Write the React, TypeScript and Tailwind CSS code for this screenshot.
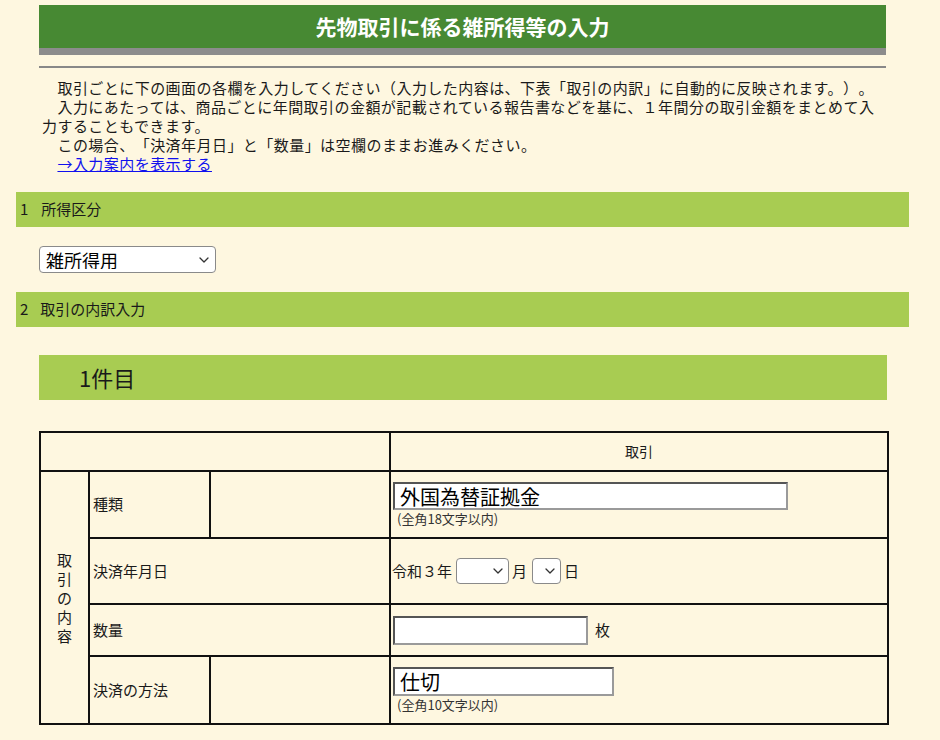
import React from "react";

const Chevron = ({ className }: { className?: string }) => (
  <svg className={className} width="10" height="6" viewBox="0 0 10 6" fill="none">
    <path d="M1 1l4 4 4-4" stroke="#333" strokeWidth="1.3" strokeLinecap="round" strokeLinejoin="round" />
  </svg>
);

const SmallSelect = ({ w }: { w: string }) => (
  <span className={`relative inline-block h-[26px] ${w}`}>
    <select className="h-full w-full appearance-none rounded-[4px] border border-[#8a8a8a] bg-white outline-none">
      <option></option>
    </select>
    <Chevron className="pointer-events-none absolute right-[6px] top-[10px]" />
  </span>
);

const inputCls =
  "block bg-white border-2 border-t-[#555] border-l-[#555] border-b-[#9a9a9a] border-r-[#9a9a9a] outline-none text-[20px] leading-none px-[5px] text-black font-['Noto_Sans_CJK_JP',sans-serif]";

const IDSP = "\u3000";

export default function App() {
  return (
    <div className="min-h-[740px] bg-[#fef7e0] font-['Noto_Sans_CJK_JP',sans-serif] text-[#1a1a1a] [text-spacing-trim:space-all]">
      <div className="ml-[16px] w-[893px] pt-[5px] pb-[20px]">
        {/* Title */}
        <div className="ml-[23px] w-[847px]">
          <div className="flex h-[43px] items-center justify-center bg-[#478933] text-[21px] font-bold text-white">
            先物取引に係る雑所得等の入力
          </div>
          <div className="h-[7px] bg-[#8c8c8c]" />
          <div className="mt-[11px] h-[2px] bg-[#888]" />
        </div>

        {/* Intro */}
        <div className="ml-[26px] mt-[10px] w-[844px] text-[15px] leading-[19px] tracking-[0.45px]">
          <p>{IDSP}取引ごとに下の画面の各欄を入力してください（入力した内容は、下表「取引の内訳」に自動的に反映されます。）。</p>
          <p>{IDSP}入力にあたっては、商品ごとに年間取引の金額が記載されている報告書などを基に、１年間分の取引金額をまとめて入力することもできます。</p>
          <p>{IDSP}この場合、「決済年月日」と「数量」は空欄のままお進みください。</p>
          <p>
            {IDSP}
            <a href="#" className="text-[#1010ee] underline">→入力案内を表示する</a>
          </p>
        </div>

        {/* Section 1 */}
        <div className="mt-[19px] flex h-[35px] items-center bg-[#a8cc52] pl-[4px] text-[15px]">
          <span>1</span>
          <span className="ml-[13px]">所得区分</span>
        </div>

        <div className="relative ml-[23px] mt-[19px] h-[27px] w-[177px]">
          <select className="h-full w-full appearance-none rounded-[4px] border border-[#8a8a8a] bg-white pl-[6px] text-[18px] leading-none text-black outline-none font-['Noto_Sans_CJK_JP',sans-serif]">
            <option>雑所得用</option>
          </select>
          <Chevron className="pointer-events-none absolute right-[7px] top-[11px]" />
        </div>

        {/* Section 2 */}
        <div className="mt-[19px] flex h-[35px] items-center bg-[#a8cc52] pl-[4px] text-[15px]">
          <span>2</span>
          <span className="ml-[12px]">取引の内訳入力</span>
        </div>

        <div className="ml-[23px] mt-[28px] flex h-[45px] w-[848px] items-center bg-[#a8cc52] pl-[40px] text-[22px]">
          1件目
        </div>

        {/* Table */}
        <table className="ml-[23px] mt-[31px] w-[848px] table-fixed border-collapse border-2 border-[#111] text-[15px]">
          <colgroup>
            <col className="w-[49px]" />
            <col className="w-[121px]" />
            <col className="w-[180px]" />
            <col className="w-[498px]" />
          </colgroup>
          <tbody>
            <tr className="h-[39px]">
              <td colSpan={3} className="border-2 border-[#111]" />
              <td className="border-2 border-[#111] text-center text-[14px]">取引</td>
            </tr>
            <tr className="h-[67px]">
              <td rowSpan={4} className="border-2 border-[#111] text-center align-middle leading-[19px]">
                <div className="flex flex-col items-center">
                  <span>取</span>
                  <span>引</span>
                  <span>の</span>
                  <span>内</span>
                  <span>容</span>
                </div>
              </td>
              <td className="border-2 border-[#111] pl-[3px]">種類</td>
              <td className="border-2 border-[#111]" />
              <td className="border-2 border-[#111] pl-[2px]">
                <input className={`${inputCls} h-[28px] w-[395px]`} defaultValue="外国為替証拠金" />
                <div className="mt-[1px] pl-[4px] text-[13px] leading-[16px] text-[#333]">(全角18文字以内)</div>
              </td>
            </tr>
            <tr className="h-[66px]">
              <td colSpan={2} className="border-2 border-[#111] pl-[3px]">決済年月日</td>
              <td className="border-2 border-[#111] pl-[1px]">
                <div className="flex items-center">
                  <span>令和３年</span>
                  <span className="ml-[4px] flex items-center">
                    <SmallSelect w="w-[53px]" />
                  </span>
                  <span className="ml-[3px]">月</span>
                  <span className="ml-[5px] flex items-center">
                    <SmallSelect w="w-[29px]" />
                  </span>
                  <span className="ml-[3px]">日</span>
                </div>
              </td>
            </tr>
            <tr className="h-[52px]">
              <td colSpan={2} className="border-2 border-[#111] pl-[3px]">数量</td>
              <td className="border-2 border-[#111] pl-[2px]">
                <div className="flex items-center">
                  <input className={`${inputCls} h-[29px] w-[195px]`} defaultValue="" />
                  <span className="ml-[7px]">枚</span>
                </div>
              </td>
            </tr>
            <tr className="h-[68px]">
              <td className="border-2 border-[#111] pl-[3px]">決済の方法</td>
              <td className="border-2 border-[#111]" />
              <td className="border-2 border-[#111] pl-[2px]">
                <input className={`${inputCls} h-[29px] w-[221px]`} defaultValue="仕切" />
                <div className="mt-[1px] pl-[4px] text-[13px] leading-[16px] text-[#333]">(全角10文字以内)</div>
              </td>
            </tr>
          </tbody>
        </table>
      </div>
    </div>
  );
}
